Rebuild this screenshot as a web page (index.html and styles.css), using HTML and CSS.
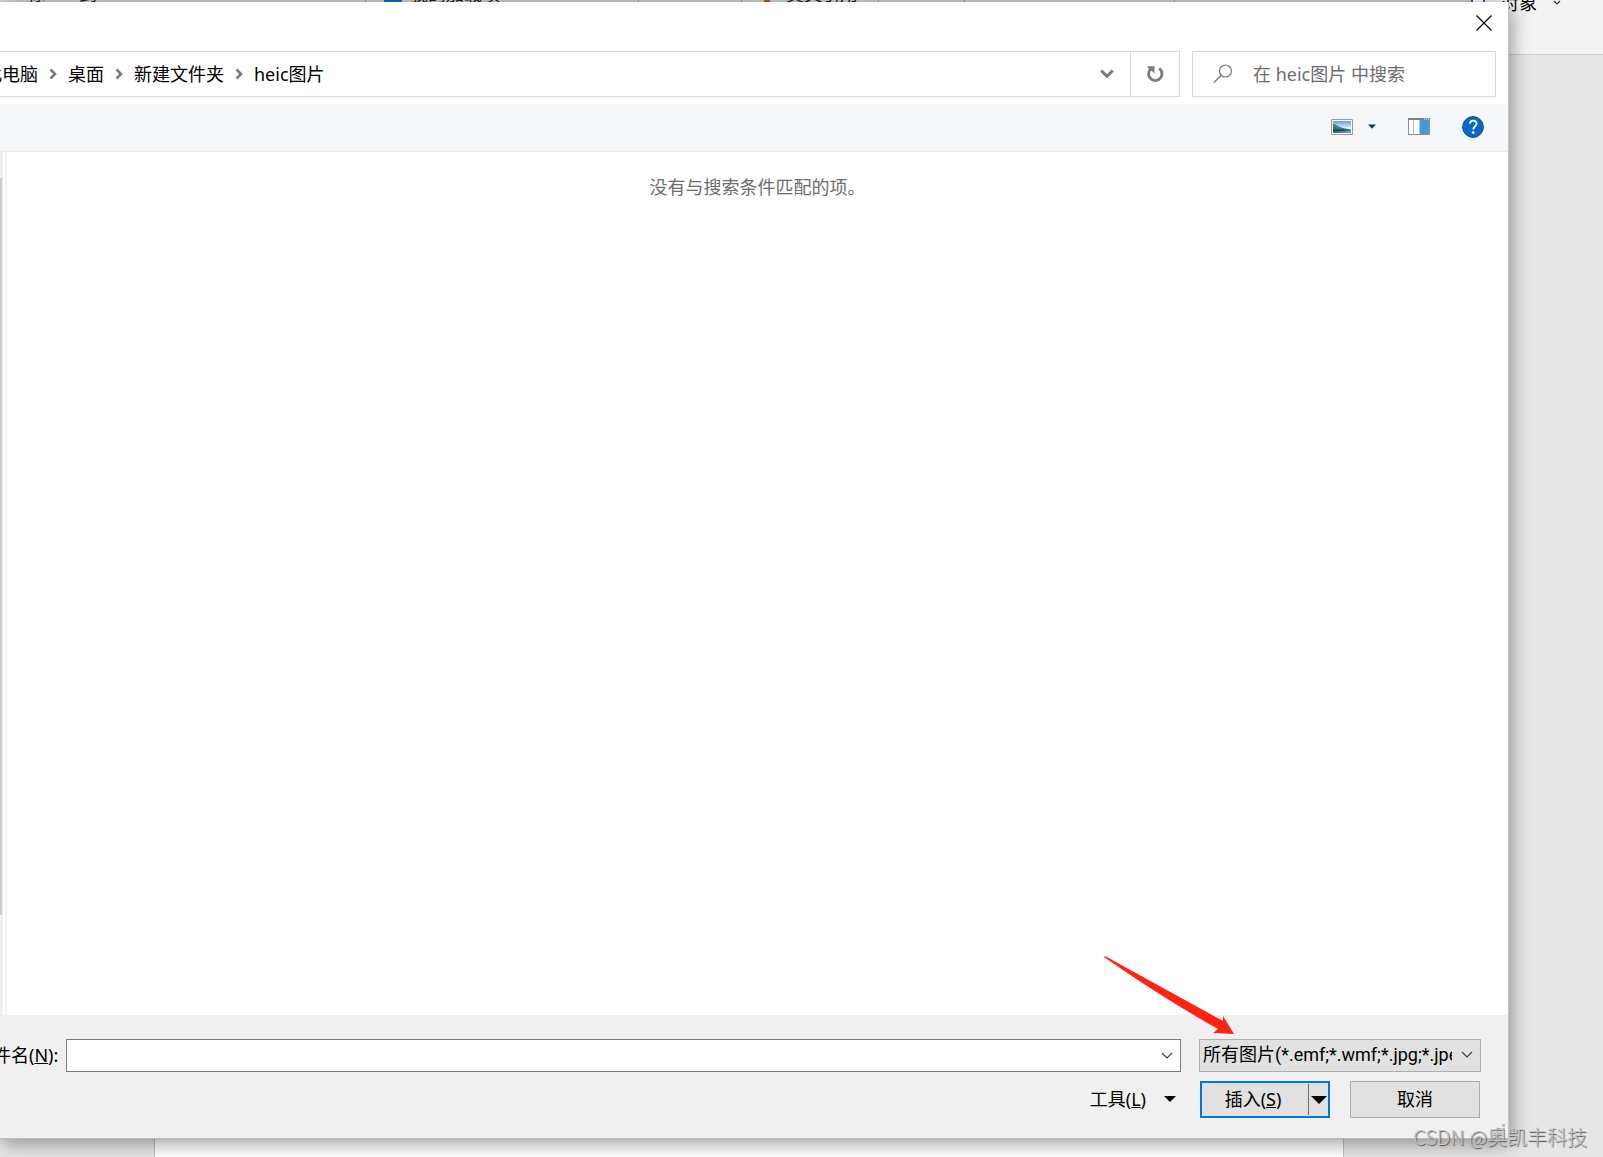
FILE: index.html
```
<!DOCTYPE html>
<html lang="zh-CN">
<head>
<meta charset="utf-8">
<title>插入图片</title>
<link rel="stylesheet" href="styles.css">
</head>
<body>
<main class="desktop">
  <header class="ribbon">
    <div class="ribbon-groups" aria-hidden="true">
      <div class="group group-shapes"><span>标</span><span>到</span></div>
      <div class="group group-addins"><i class="store"></i><span>我的加载项</span></div>
      <div class="group group-media"></div>
      <div class="group group-links"><i class="mark"></i><span>交叉引用</span></div>
      <div class="group group-comment"></div>
      <div class="group group-header"></div>
    </div>
    <button class="object-button" type="button">
      <svg width="14" height="14" viewBox="0 0 14 14"><path d="M1 1h12v12H1z" fill="#fff" stroke="#2f5f9e" stroke-width="2"/></svg>
      <span>对象</span>
      <svg width="8" height="6" viewBox="0 0 8 6"><path d="M1 1l3 3 3-3" fill="none" stroke="#333" stroke-width="1.2"/></svg>
    </button>
  </header>
  <div class="workspace"><div class="paper"></div></div>

  <section class="dialog" role="dialog" aria-label="插入图片">
    <div class="titlebar">
      <button class="plain close" type="button" aria-label="关闭">
        <svg width="16" height="16" viewBox="0 0 16 16"><path d="M.5.5l15 15M15.5.5l-15 15" stroke="#000" stroke-width="1.2"/></svg>
      </button>
    </div>

    <div class="address-row">
      <nav class="address" aria-label="路径">
        <div class="crumbs">
          <a href="#">此电脑</a>
          <svg width="8" height="12" viewBox="0 0 8 12"><path d="M1.5 1.5L6 6l-4.5 4.5" fill="none" stroke="#7b7b7b" stroke-width="2.6"/></svg>
          <a href="#">桌面</a>
          <svg width="8" height="12" viewBox="0 0 8 12"><path d="M1.5 1.5L6 6l-4.5 4.5" fill="none" stroke="#7b7b7b" stroke-width="2.6"/></svg>
          <a href="#">新建文件夹</a>
          <svg width="8" height="12" viewBox="0 0 8 12"><path d="M1.5 1.5L6 6l-4.5 4.5" fill="none" stroke="#7b7b7b" stroke-width="2.6"/></svg>
          <a href="#">heic图片</a>
        </div>
        <button class="plain history" type="button" aria-label="以前的位置">
          <svg width="14" height="10" viewBox="0 0 14 10"><path d="M1.2 1.5L7 7.300l5.800-5.800" fill="none" stroke="#7b7b7b" stroke-width="3"/></svg>
        </button>
        <button class="plain refresh" type="button" aria-label="刷新">
          <svg width="18" height="18" viewBox="0 0 18 18"><path d="M13.2 3.4A6.700 6.700 0 1 1 5 3.700" fill="none" stroke="#7b7b7b" stroke-width="2.8"/><path d="M1 1.200h7.500v7.200L6 6 3.600 5z" fill="#7b7b7b"/></svg>
        </button>
      </nav>
      <label class="search">
        <svg width="20" height="20" viewBox="0 0 20 20"><circle cx="12.5" cy="7" r="6" fill="none" stroke="#777" stroke-width="1.2"/><path d="M8.200 11.300L1 18.500" stroke="#777" stroke-width="1.3"/></svg>
        <input type="text" placeholder="在 heic图片 中搜索" aria-label="搜索">
      </label>
    </div>

    <div class="toolbar">
      <button class="plain view" type="button" aria-label="更改视图">
        <svg width="22" height="16" viewBox="0 0 22 16">
          <defs><linearGradient id="sky" x1="0" y1="0" x2="0" y2="1"><stop offset="0" stop-color="#5b9df0"/><stop offset=".6" stop-color="#e4f2fb"/></linearGradient><linearGradient id="sea" x1="0" y1="0" x2="1" y2="0"><stop offset="0" stop-color="#2b5f86"/><stop offset="1" stop-color="#5fa3d8"/></linearGradient></defs>
          <path d="M.5.5h21v15H.5z" fill="#fff" stroke="#9a9a9a"/>
          <path d="M2 2h18v12H2z" fill="url(#sky)"/>
          <path d="M2 11h18v3H2z" fill="url(#sea)"/>
          <path d="M2 5c3 0 4 2 7 3 3 1 7 2 11 2.500V11.500H2z" fill="#4d7f5c"/>
          <path d="M2 10c6 0 12 .5 18 1l-9 1H2z" fill="#23485c"/>
        </svg>
        <svg width="8" height="5" viewBox="0 0 8 5"><path d="M0 .5h8L4 4.800z" fill="#17365d"/></svg>
      </button>
      <button class="plain" type="button" aria-label="预览窗格">
        <svg width="22" height="17" viewBox="0 0 22 17">
          <path d="M.5.5h21v16H.5z" fill="#fff" stroke="#8a8f94"/>
          <path d="M0 0h22v2H0z" fill="#7d8287"/>
          <path d="M5.500 2v14" stroke="#b5b9bd"/>
          <path d="M12 2h9v14h-9z" fill="#3f9be3"/>
          <path d="M11.500 2v14" stroke="#a8cdea"/>
          <path d="M16 1h1M18 1h1M20 1h1" stroke="#fff"/>
        </svg>
      </button>
      <button class="plain" type="button" aria-label="帮助">
        <svg width="22" height="22" viewBox="0 0 22 22"><circle cx="11" cy="11" r="10.4" fill="#0869c8" stroke="#0b4a8f"/><path d="M8 7.600c.2-4 6.700-3.800 6.500 0 0 2.700-3.200 2.800-3.200 5.800" fill="none" stroke="#fff" stroke-width="1.9"/><circle cx="11.2" cy="16.6" r="1.4" fill="#fff"/></svg>
      </button>
    </div>

    <div class="browser">
      <div class="scroll-track"><div class="scroll-thumb"></div></div>
      <div class="files"><p>没有与搜索条件匹配的项。</p></div>
    </div>

    <form class="footer">
      <div class="field-row">
        <label class="name-label" for="filename">文件名(<u>N</u>):</label>
        <div class="combo">
          <input id="filename" type="text">
          <button class="plain" type="button" aria-label="显示文件名列表">
            <svg width="12" height="8" viewBox="0 0 12 8"><path d="M1 1l5 5 5-5" fill="none" stroke="#444" stroke-width="1.2"/></svg>
          </button>
        </div>
        <div class="type">
          <select aria-label="文件类型"><option>所有图片(*.emf;*.wmf;*.jpg;*.jpeg;*.jfif)</option></select>
          <svg width="12" height="8" viewBox="0 0 12 8"><path d="M1 1l5 5 5-5" fill="none" stroke="#444" stroke-width="1.2"/></svg>
        </div>
      </div>
      <div class="action-row">
        <button class="plain tools" type="button"><span>工具(<u>L</u>)</span>
          <svg width="12" height="6" viewBox="0 0 12 6"><path d="M0 0h12L6 6z"/></svg>
        </button>
        <div class="split">
          <button class="plain insert" type="button">插入(<u>S</u>)</button>
          <button class="plain more" type="button" aria-label="更多插入方式">
            <svg width="16" height="8" viewBox="0 0 16 8"><path d="M0 0h16L8 8z"/></svg>
          </button>
        </div>
        <button class="cancel" type="button">取消</button>
      </div>
    </form>
    <div class="grip"></div>
  </section>

  <svg class="pointer" width="132" height="80" viewBox="0 0 132 80" aria-hidden="true"><path d="M1 0L119 65V60L130 78l-21-1 5-4Q57 41 0 1z" fill="#ff2314"/></svg>
  <p class="watermark">CSDN @奥凯丰科技</p>
</main>
</body>
</html>
```

FILE: styles.css
```
* { box-sizing: border-box; }

body {
  margin: 0;
  font: 18px/24px "Noto Sans", "Noto Sans CJK SC", sans-serif;
  color: #000;
}

svg { display: block; flex: none; }
p { margin: 0; }
a { color: inherit; text-decoration: none; }
button, input, select { font: inherit; color: inherit; margin: 0; }
.plain { background: none; border: 0; padding: 0; }

.desktop {
  position: relative;
  display: flex;
  flex-direction: column;
  height: 100vh;
  overflow: hidden;
  background: #e6e6e6;
}

/* Word window behind the dialog */
.ribbon {
  display: flex;
  justify-content: space-between;
  height: 55px;
  flex: none;
  overflow: hidden;
  background: #f3f3f3;
  border-bottom: 1px solid #cfcfcf;
}
.ribbon-groups { display: flex; height: 2px; flex: 1; background: #d2d2d2; color: #222; }
.group { display: flex; align-items: flex-end; gap: 4px; border-right: 1px solid #9a9a9a; }
.group span { margin-bottom: -4px; white-space: nowrap; }
.group-shapes { width: 366px; padding-left: 27px; gap: 34px; }
.group-addins { width: 273px; padding-left: 18px; gap: 8px; }
.group-media { width: 103px; }
.group-links { width: 137px; padding-left: 22px; gap: 16px; }
.group-comment { width: 86px; }
.group-header { width: 210px; }
.store { width: 18px; height: 2px; background: #0f6cbd; }
.mark { width: 6px; height: 2px; background: #d24726; }

.object-button {
  display: flex;
  align-items: center;
  gap: 16px;
  height: 24px;
  margin: -9px 42px 0 0;
  padding: 0;
  border: 0;
  background: none;
}

.workspace { flex: 1; display: flex; padding: 0 259px 0 154px; }
.paper { flex: 1; background: #fff; border: solid #c0c0c0; border-width: 0 1px; }

/* Dialog window */
.dialog {
  position: absolute;
  inset: 2px 94px 18px 0;
  display: flex;
  flex-direction: column;
  background: #fff;
  border-right: 1px solid #c4c4c4;
  border-bottom: 1px solid #bbb;
  box-shadow: 2px 4px 18px rgba(0, 0, 0, .4);
}

.titlebar { display: flex; justify-content: flex-end; height: 49px; padding: 13px 16px 0 0; }
.close { height: 16px; }

.address-row { display: flex; gap: 12px; height: 46px; padding-right: 12px; }
.address { flex: 1; display: flex; border: 1px solid #d9d9d9; border-left: 0; }
.crumbs { flex: 1; display: flex; align-items: center; gap: 11px; margin-left: -16px; padding-bottom: 1px; white-space: nowrap; }
.history { width: 46px; display: grid; place-items: center; }
.refresh { width: 49px; display: grid; place-items: center; border-left: 1px solid #d9d9d9; }
.search {
  width: 304px;
  display: flex;
  align-items: center;
  gap: 20px;
  padding: 0 20px;
  border: 1px solid #d9d9d9;
}
.search input { flex: 1; min-width: 0; padding: 0; border: 0; outline: 0; background: none; }
.search input::placeholder { color: #6d6d6d; opacity: 1; }

.toolbar {
  display: flex;
  justify-content: flex-end;
  align-items: center;
  gap: 32px;
  height: 48px;
  margin-top: 7px;
  padding: 0 24px 2px 0;
  background: #f5f6f7;
  border-bottom: 1px solid #e9e9e9;
}
.view { display: flex; align-items: center; gap: 15px; }

.browser { flex: 1; display: flex; gap: 2px; }
.scroll-track { width: 3px; padding: 26px 1px 100px 0; background: #f0f0f0; }
.scroll-thumb { height: 100%; background: #cdcdcd; }
.files { flex: 1; padding-top: 23px; border-left: 2px solid #f5f5f5; text-align: center; color: #6d6d6d; }

.footer { height: 123px; padding: 24px 27px 0 0; background: #f0f0f0; }
.field-row { display: flex; align-items: center; }
.name-label { flex: none; margin: 0 8px 0 -25px; padding-bottom: 2px; }
.combo { flex: 1; display: flex; height: 33px; background: #fff; border: 1px solid #7a7a7a; }
.combo input { flex: 1; min-width: 0; padding: 0 4px; border: 0; outline: 0; background: none; }
.combo button { width: 26px; display: grid; place-items: center; }
.type {
  width: 282px;
  height: 33px;
  display: flex;
  align-items: center;
  margin-left: 18px;
  padding: 0 7px 2px 3px;
  background: #e1e1e1;
  border: 1px solid #adadad;
}
.type select {
  appearance: none;
  flex: 1;
  min-width: 0;
  margin-right: 9px;
  padding: 0;
  border: 0;
  outline: 0;
  background: none;
  font-family: Roboto, "Noto Sans CJK SC", sans-serif;
  text-overflow: clip;
}

.action-row { display: flex; justify-content: flex-end; gap: 20px; margin-top: 9px; padding-right: 1px; }
.tools { display: flex; align-items: center; gap: 18px; margin-right: 4px; padding-bottom: 2px; }
.split { display: flex; width: 130px; height: 37px; background: #e1e1e1; border: 2px solid #0078d7; }
.insert { flex: 1; padding: 0 4px 2px 0; }
.more { width: 20px; margin: 1px 0; border-left: 1px solid #696969; display: grid; place-items: center; }
.cancel { width: 130px; height: 37px; padding: 0 0 2px; background: #e1e1e1; border: 1px solid #adadad; }

/* Size grip in the dialog corner */
.grip {
  position: absolute;
  right: 3px;
  bottom: 2px;
  width: 12px;
  height: 12px;
  background:
    linear-gradient(#bfbfbf, #bfbfbf) 9px 0 / 3px 3px no-repeat,
    linear-gradient(#bfbfbf, #bfbfbf) 5px 4px / 3px 3px no-repeat,
    linear-gradient(#bfbfbf, #bfbfbf) 9px 4px / 3px 3px no-repeat;
}

/* Annotations over the windows */
.pointer { position: absolute; right: 367px; bottom: 121px; }
.watermark {
  position: absolute;
  right: 16px;
  bottom: 8px;
  font: 20px/24px "Noto Sans CJK SC", sans-serif;
  font-weight: 300;
  color: #c4c4c4;
  text-shadow: 1px 1px 1px #555;
  white-space: nowrap;
}
```
